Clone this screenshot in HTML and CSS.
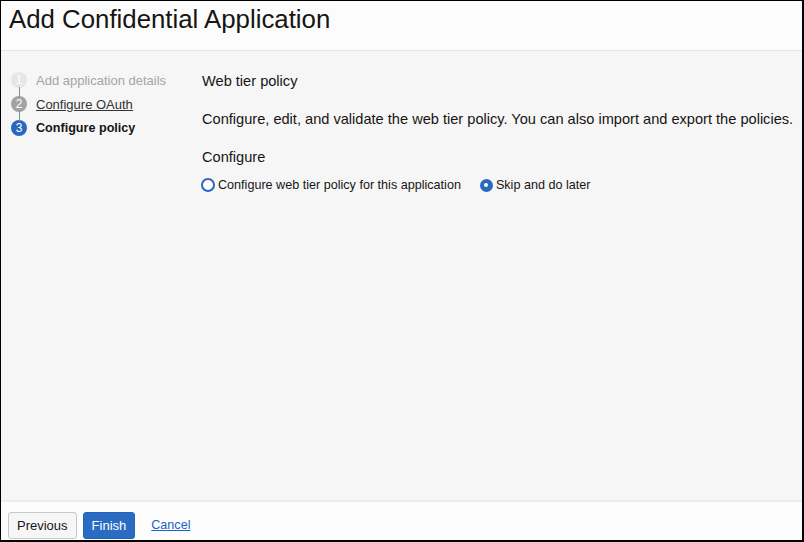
FILE: index.html
```html
<!DOCTYPE html>
<html>
<head>
<meta charset="utf-8">
<link rel="stylesheet" href="styles.css">
</head>
<body>
<div class="frame">
  <header class="header">
    <h1 class="title">Add Confidential Application</h1>
  </header>
  <main class="body">
    <nav class="steps">
      <div class="step done">
        <span class="num">1</span><span class="label">Add application details</span>
      </div>
      <div class="step visited">
        <span class="num">2</span><span class="label">Configure OAuth</span>
      </div>
      <div class="step current">
        <span class="num">3</span><span class="label">Configure policy</span>
      </div>
    </nav>
    <section class="content">
      <h2 class="section-title">Web tier policy</h2>
      <p class="desc">Configure, edit, and validate the web tier policy. You can also import and export the policies.</p>
      <h3 class="group-title">Configure</h3>
      <div class="radios">
        <label class="radio"><span class="dot focus"></span>Configure web tier policy for this application</label>
        <label class="radio"><span class="dot checked"></span>Skip and do later</label>
      </div>
    </section>
  </main>
  <footer class="footer">
    <button class="btn">Previous</button>
    <button class="btn primary">Finish</button>
    <a class="link" href="#">Cancel</a>
  </footer>
</div>
</body>
</html>
```
FILE: styles.css
```css
html, body {
  margin: 0;
  padding: 0;
  background: #fff;
}
body {
  font-family: "Liberation Sans", Arial, sans-serif;
  color: #161513;
}
.frame {
  width: 801px;
  height: 539px;
  border: 1px solid #000;
  border-right-width: 2px;
  border-bottom-width: 2px;
  display: flex;
  flex-direction: column;
  background: #f6f6f6;
}
.header {
  height: 50px;
  background: #fcfcfc;
  border-bottom: 1px solid #e4e4e4;
  box-sizing: border-box;
  padding: 4px 8px 0;
}
.title {
  margin: 0;
  font-weight: normal;
  font-size: 25.8px;
  color: #161513;
}
.body {
  flex: 1;
  display: flex;
  padding-top: 21px;
}
.steps {
  width: 201px;
  padding-left: 10px;
  box-sizing: border-box;
  display: flex;
  flex-direction: column;
  gap: 8px;
}
.step {
  display: flex;
  align-items: center;
  height: 16px;
  font-size: 13px;
  position: relative;
}
.step + .step::before {
  content: "";
  position: absolute;
  left: 7.5px;
  top: -9px;
  width: 1px;
  height: 10px;
  background: #8a8a8a;
}
.num {
  width: 16px;
  height: 16px;
  border-radius: 50%;
  display: inline-flex;
  align-items: center;
  justify-content: center;
  font-size: 12px;
  color: #fff;
  margin-right: 9px;
  flex: none;
}
.done .num { background: #e6e6e6; }
.done .label { color: #a5a5a5; }
.visited .num { background: #a3a3a3; }
.visited .label { color: #333; text-decoration: underline; }
.current .num { background: #2a68c0; }
.current .label { font-weight: bold; color: #161513; font-size: 12.6px; }
.content {
  flex: 1;
  padding-top: 1px;
}
.section-title {
  margin: 0;
  font-weight: normal;
  font-size: 14.6px;
  line-height: 16px;
}
.desc {
  margin: 22px 0 0;
  font-size: 14.6px;
  line-height: 16px;
}
.group-title {
  margin: 22px 0 0;
  font-weight: normal;
  font-size: 14.6px;
  line-height: 16px;
}
.radios {
  display: flex;
  gap: 19px;
  margin-top: 13px;
}
.radio {
  display: flex;
  align-items: center;
  font-size: 12.6px;
  color: #161513;
}
.dot {
  width: 13px;
  height: 13px;
  border-radius: 50%;
  box-sizing: border-box;
  margin-right: 3px;
  flex: none;
}
.dot.focus {
  width: 14px;
  height: 14px;
  border: 2px solid #2a68c0;
  background: #fff;
  margin-left: -1px;
}
.dot.checked {
  background: #2a68c0;
  position: relative;
}
.dot.checked::after {
  content: "";
  position: absolute;
  left: 4.5px;
  top: 4.5px;
  width: 4px;
  height: 4px;
  border-radius: 50%;
  background: #fff;
}
.footer {
  height: 40px;
  box-sizing: border-box;
  background: #fdfdfd;
  border-top: 2px solid #ececec;
  display: flex;
  align-items: center;
  padding: 8px 0 0 7px;
  gap: 6px;
}
.btn {
  height: 27px;
  padding: 0 8px;
  font-family: inherit;
  font-size: 13px;
  border: 1px solid #c8c8c8;
  background: #f6f6f6;
  border-radius: 3px;
  color: #161513;
}
.btn.primary {
  background: #2a6cc4;
  border-color: #2563b5;
  color: #fff;
}
.link {
  margin-left: 10px;
  font-size: 12.6px;
  color: #1a62c7;
  text-decoration: underline;
}
```
